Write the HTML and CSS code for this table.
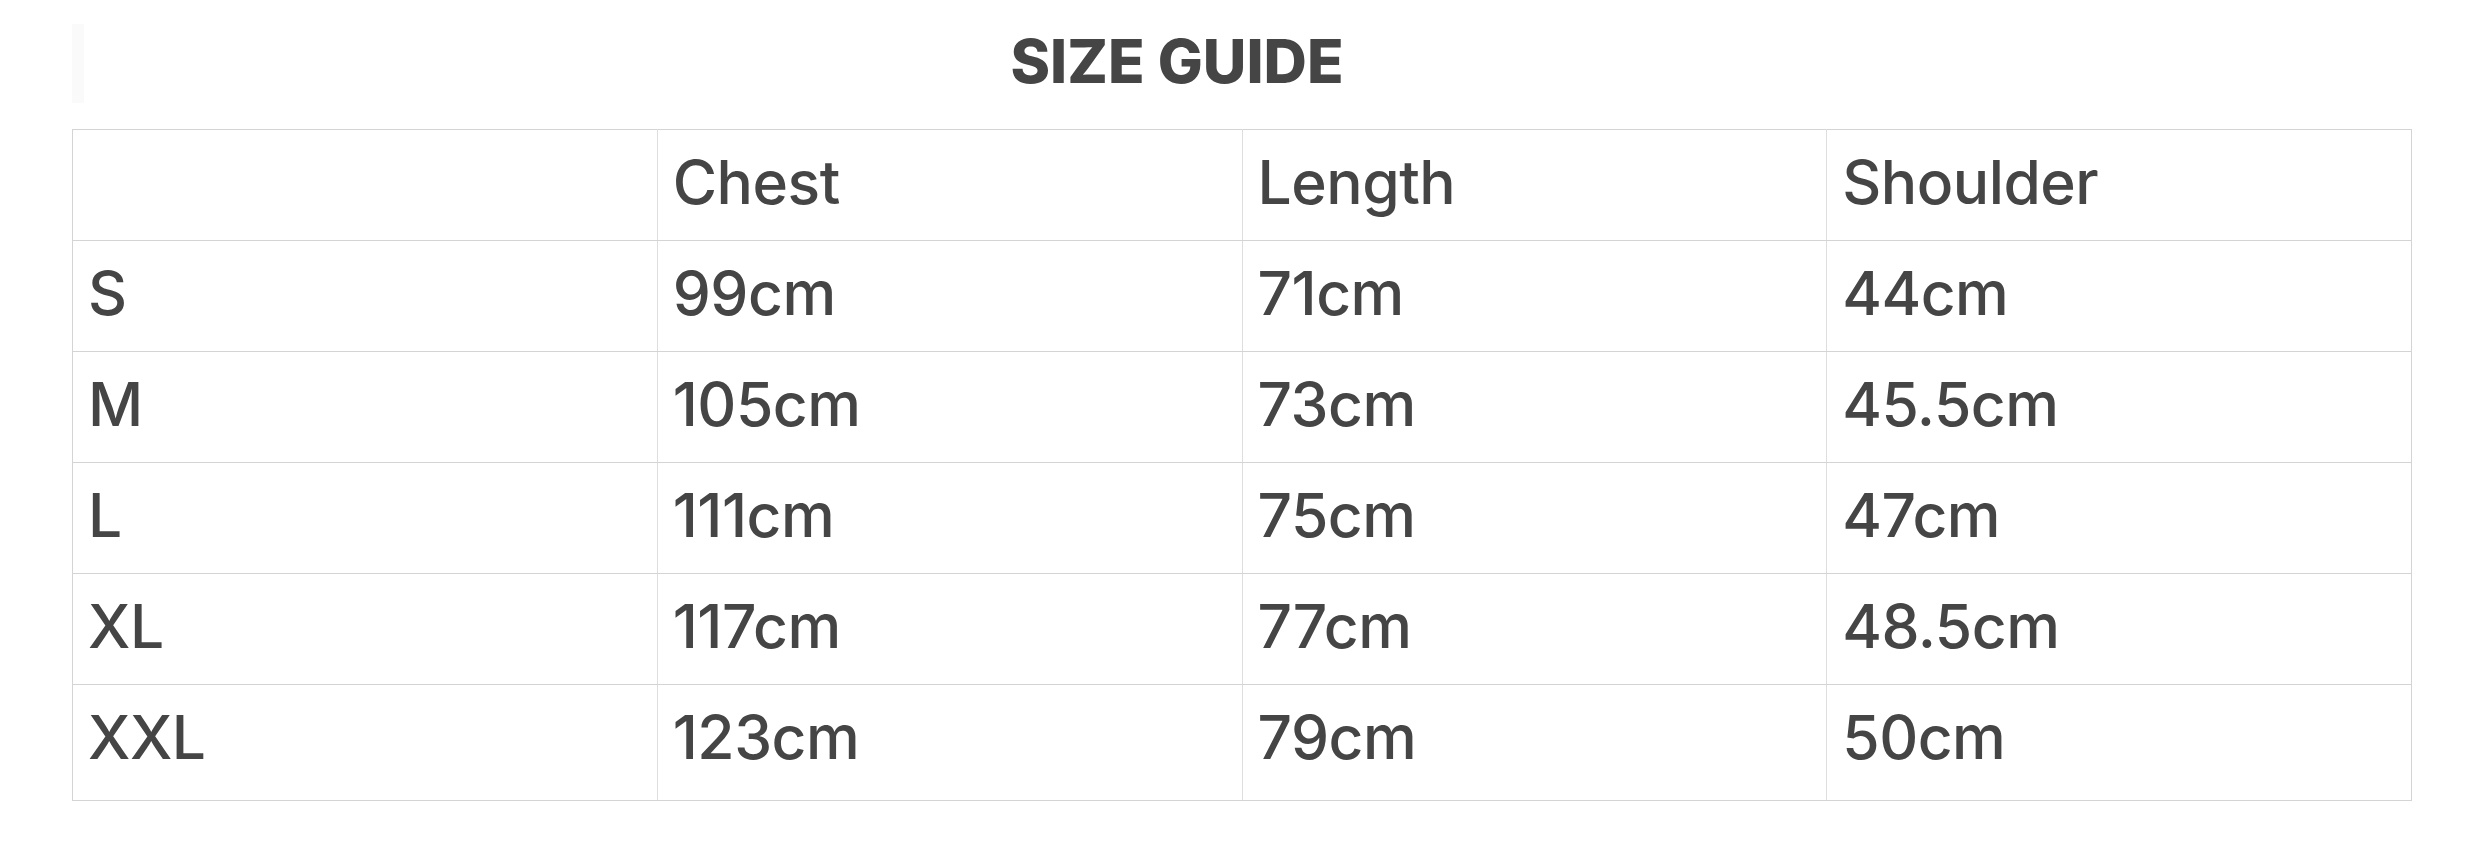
FILE: index.html
```html
<!DOCTYPE html>
<html lang="en">
<head>
<meta charset="utf-8">
<title>Size Guide</title>
<link rel="stylesheet" href="styles.css">
</head>
<body>
<div class="page">
  <div class="head">
    <div class="head-mark"></div>
    <h1 class="title">SIZE GUIDE</h1>
  </div>
  <table class="sizes">
    <tr><td></td><td>Chest</td><td>Length</td><td>Shoulder</td></tr>
    <tr><td>S</td><td>99cm</td><td>71cm</td><td>44cm</td></tr>
    <tr><td>M</td><td>105cm</td><td>73cm</td><td>45.5cm</td></tr>
    <tr><td>L</td><td>111cm</td><td>75cm</td><td>47cm</td></tr>
    <tr><td>XL</td><td>117cm</td><td>77cm</td><td>48.5cm</td></tr>
    <tr class="last"><td>XXL</td><td>123cm</td><td>79cm</td><td>50cm</td></tr>
  </table>
</div>
</body>
</html>
```

FILE: styles.css
```css
html, body {
  margin: 0;
  padding: 0;
  background: #ffffff;
}
.page {
  padding: 0 73px 0 72px;
  font-family: Inter, "Liberation Sans", Arial, sans-serif;
  color: #454545;
}
.head {
  display: flex;
  width: 2198px;
  height: 129px;
}
.head-mark {
  width: 12px;
  height: 79px;
  margin-top: 24px;
  background: #fafafa;
}
.title {
  flex: 1;
  margin: 0;
  padding-top: 26px;
  text-align: center;
  font-size: 60px;
  line-height: 70px;
  font-weight: 800;
  letter-spacing: 0;
}
.sizes {
  width: 2340px;
  border-collapse: collapse;
  table-layout: fixed;
}
.sizes td {
  width: 25%;
  border-top: 1px solid #d4d4d4;
  border-bottom: 1px solid #d4d4d4;
  border-left: 1px solid #dedede;
  border-right: 1px solid #dedede;
  padding: 17px 15px 23px 15px;
  height: 70px;
  font-size: 60.5px;
  line-height: 70px;
  font-weight: 500;
  letter-spacing: -0.5px;
  vertical-align: top;
  white-space: nowrap;
}
.sizes td:first-child {
  border-left-color: #d4d4d4;
}
.sizes td:last-child {
  border-right-color: #d4d4d4;
}
.sizes .last td {
  padding-bottom: 28px;
}
```
